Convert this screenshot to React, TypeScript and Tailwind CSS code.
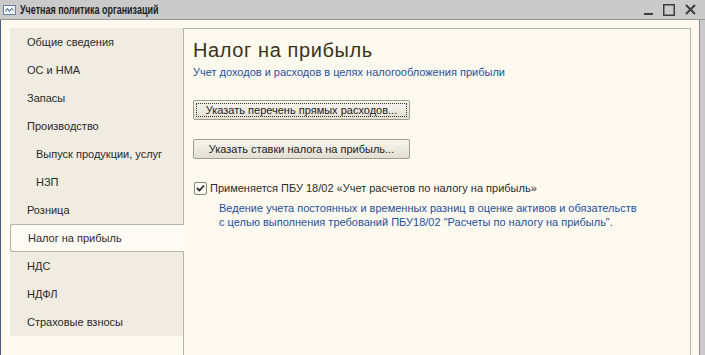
const navItems = [
  { label: 'Общие сведения' },
  { label: 'ОС и НМА' },
  { label: 'Запасы' },
  { label: 'Производство' },
  { label: 'Выпуск продукции, услуг', sub: true },
  { label: 'НЗП', sub: true },
  { label: 'Розница' },
  { label: 'Налог на прибыль', active: true },
  { label: 'НДС' },
  { label: 'НДФЛ' },
  { label: 'Страховые взносы' },
];

function TitleIcon() {
  return (
    <svg width="13" height="10" viewBox="0 0 13 10">
      <rect x="0.5" y="0.5" width="12" height="9" fill="#f4f6fa" stroke="#6d7fa6" />
      <path d="M2.5 6.5 L4.5 3.5 L6.5 6.5 L8.5 3.5 L10.5 5" fill="none" stroke="#2f4f8f" strokeWidth="1" />
    </svg>
  );
}

function WindowButtons() {
  return (
    <div className="flex items-center gap-[10px] pr-[9px] text-[#3c3c3c]">
      <svg width="9" height="12" viewBox="0 0 9 12">
        <rect x="0" y="9" width="9" height="2" fill="currentColor" />
      </svg>
      <svg width="12" height="12" viewBox="0 0 12 12">
        <rect x="0.75" y="0.75" width="10.5" height="10.5" fill="none" stroke="currentColor" strokeWidth="1.5" />
      </svg>
      <svg width="11" height="11" viewBox="0 0 11 11">
        <path d="M1 1 L10 10 M10 1 L1 10" stroke="currentColor" strokeWidth="2" />
      </svg>
    </div>
  );
}

function Button({ label, focused }: { label: string; focused?: boolean }) {
  return (
    <button className="w-[217px] h-[20px] p-[2px] rounded-[2px] border border-[#a09c90] bg-gradient-to-b from-[#f7f5ef] to-[#e2ded2] text-[11px] text-[#222]">
      <span
        className={`flex h-full items-center justify-center ${focused ? 'border border-dotted border-[#333]' : 'border border-transparent'}`}
      >
        {label}
      </span>
    </button>
  );
}

export default function App() {
  return (
    <div className="w-[705px] h-[355px] overflow-hidden flex flex-col bg-[#cacaca] font-['Liberation_Sans',Arial,sans-serif]">
      <div className="h-[20px] flex items-center justify-between border-b border-[#9a9a9a]">
        <div className="flex items-center gap-[4px] pl-[3px]">
          <TitleIcon />
          <span className="inline-block origin-left scale-x-[0.69] text-[13px] font-bold text-[#1e1e1e] whitespace-nowrap">
            Учетная политика организаций
          </span>
        </div>
        <WindowButtons />
      </div>

      <div className="flex-1 flex mr-[5px] border-l border-r border-l-[#4a5a7a] border-r-[#8a8a8a] bg-[#fffaf0] pt-[8px] pl-[9px] pr-[8px]">
        <nav className="w-[173px] self-start flex flex-col bg-[#f1ece2]">
          {navItems.map((item) =>
            item.active ? (
              <div
                key={item.label}
                className="relative z-10 -mr-[1px] h-[28px] flex items-center pl-[17px] rounded-l-[3px] border border-r-0 border-[#b9b3a3] bg-[#fffcf5] text-[11px] text-[#2a2a2a]"
              >
                {item.label}
              </div>
            ) : (
              <div
                key={item.label}
                className={`h-[28px] flex items-center text-[11px] text-[#2a2a2a] ${item.sub ? 'pl-[26px]' : 'pl-[17px]'}`}
              >
                {item.label}
              </div>
            ),
          )}
        </nav>

        <section className="flex-1 border border-[#bcb59f] border-b-0 bg-[#fffaf0] pl-[9px] pt-[9px]">
          <h1 className="text-[20px] leading-[24px] tracking-[0.6px] text-[#3a3220]">Налог на прибыль</h1>
          <p className="mt-[3px] text-[11px] leading-[14px] text-[#24509a]">
            Учет доходов и расходов в целях налогообложения прибыли
          </p>

          <div className="mt-[21px] flex flex-col gap-[19px]">
            <Button label="Указать перечень прямых расходов..." focused />
            <Button label="Указать ставки налога на прибыль..." />
          </div>

          <div className="mt-[22px] flex items-center gap-[3px] pl-[1px]">
            <span className="w-[13px] h-[13px] flex items-center justify-center border border-[#8a8678] rounded-[2px] bg-[#fdfcf8]">
              <svg width="9" height="8" viewBox="0 0 9 8">
                <path d="M1 4 L3.5 6.5 L8 1.5" fill="none" stroke="#2a2a2a" strokeWidth="1.8" />
              </svg>
            </span>
            <span className="text-[11px] leading-[14px] text-[#2a2a2a]">
              Применяется ПБУ 18/02 «Учет расчетов по налогу на прибыль»
            </span>
          </div>
          <p className="mt-[6px] pl-[26px] text-[11px] leading-[14px] text-[#24509a]">
            Ведение учета постоянных и временных разниц в оценке активов и обязательств
            <br />
            с целью выполнения требований ПБУ18/02 "Расчеты по налогу на прибыль".
          </p>
        </section>
      </div>
    </div>
  );
}
